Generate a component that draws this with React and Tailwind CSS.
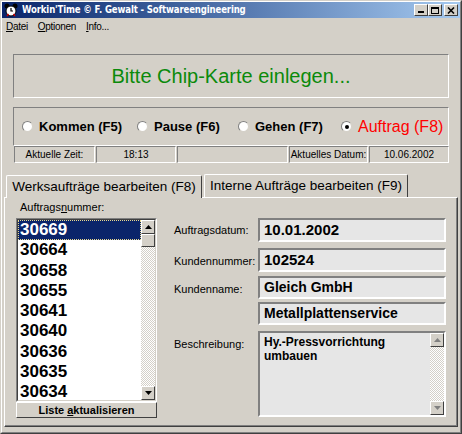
import React from 'react';

const raised = 'border border-t-white border-l-white border-r-[#404040] border-b-[#404040] bg-[#d4d0c8]';
const sunken = 'border border-t-[#808080] border-l-[#808080] border-r-white border-b-white';
const checker = 'bg-[repeating-conic-gradient(#d4d0c8_0_25%,#ffffff_0_50%)] bg-[length:2px_2px]';

const Arrow = ({ up, gray }) => (
  <svg width="7" height="4" viewBox="0 0 7 4">
    <path d={up ? 'M3.5 0L7 4H0z' : 'M0 0h7L3.5 4z'} fill={gray ? '#808080' : '#000'} />
  </svg>
);

const Radio = ({ label, checked, width, red }) => (
  <div className={`flex items-center shrink-0 ${width}`}>
    <span className="w-[11px] h-[11px] rounded-full bg-white border border-t-[#808080] border-l-[#808080] border-r-[#d4d0c8] border-b-[#d4d0c8] flex items-center justify-center shrink-0">
      {checked && <span className="w-[4px] h-[4px] rounded-full bg-black" />}
    </span>
    <span
      className={
        red
          ? 'ml-[6px] text-[16px] text-[#ff0000] whitespace-nowrap'
          : 'ml-[6px] text-[13px] font-bold whitespace-nowrap'
      }
    >
      {label}
    </span>
  </div>
);

const Field = ({ children, className }) => (
  <div className={`w-[188px] border-2 border-t-[#808080] border-l-[#808080] border-r-white border-b-white bg-[#e6e6e6] pl-[4px] flex items-center font-bold ${className}`}>
    {children}
  </div>
);

const items = ['30669', '30664', '30658', '30655', '30641', '30640', '30636', '30635', '30634'];

export default function App() {
  return (
    <div className="w-[462px] h-[434px] overflow-hidden bg-[#d4d0c8] font-['Liberation_Sans',Arial,sans-serif] text-black border border-t-[#d4d0c8] border-l-[#d4d0c8] border-r-[#404040] border-b-[#404040]">
      <div className="h-full border border-t-white border-l-white border-r-[#808080] border-b-[#808080] flex flex-col">
        {/* title bar */}
        <div className="h-[16px] bg-linear-to-r from-[#0a246a] to-[#a6caf0] flex items-center pl-[2px] pr-[2px]">
          <svg width="14" height="14" viewBox="0 0 14 14" className="shrink-0">
            <circle cx="3" cy="3" r="2.5" fill="#000" />
            <circle cx="11" cy="3" r="2.5" fill="#000" />
            <circle cx="7" cy="8" r="5" fill="#fff" stroke="#000" />
            <path d="M7 5v3h2" stroke="#000" strokeWidth="1.2" fill="none" />
            <path d="M3 13l1.5-2M11 13l-1.5-2" stroke="#c00" strokeWidth="1.4" />
          </svg>
          <span className="ml-[4px] text-white font-bold text-[11px] tracking-[-0.2px] whitespace-nowrap font-['DejaVu_Sans',sans-serif] scale-x-[0.78] origin-left">
            Workin'Time © F. Gewalt - Softwareengineering
          </span>
          <div className="ml-auto flex items-center">
            <div className={`w-[14px] h-[12px] ${raised} flex items-end justify-center pb-[2px]`}>
              <span className="w-[6px] h-[2px] bg-black" />
            </div>
            <div className={`w-[14px] h-[12px] ${raised} flex items-center justify-center`}>
              <span className="w-[8px] h-[7px] border border-black border-t-2" />
            </div>
            <div className={`ml-[2px] w-[14px] h-[12px] ${raised} flex items-center justify-center`}>
              <svg width="8" height="7" viewBox="0 0 8 7">
                <path d="M1 0.5l6 6M7 0.5l-6 6" stroke="#000" strokeWidth="1.6" />
              </svg>
            </div>
          </div>
        </div>

        {/* menu */}
        <div className="h-[17px] flex items-center text-[10px] tracking-[-0.3px] pl-[4px] gap-[10px]">
          <span><u>D</u>atei</span>
          <span><u>O</u>ptionen</span>
          <span><u>I</u>nfo...</span>
        </div>

        {/* message panel */}
        <div className={`mt-[19px] ml-[11px] w-[436px] h-[44px] ${sunken} flex items-center justify-center text-[20px] text-[#0b8a0b]`}>
          Bitte Chip-Karte einlegen...
        </div>

        {/* radio panel */}
        <div className={`mt-[9px] ml-[11px] w-[436px] h-[39px] ${sunken} flex items-center pl-[8px]`}>
          <Radio label="Kommen (F5)" width="w-[115px]" />
          <Radio label="Pause (F6)" width="w-[101px]" />
          <Radio label="Gehen (F7)" width="w-[103px]" />
          <Radio label="Auftrag (F8)" checked red width="w-[105px]" />
        </div>

        {/* status bar */}
        <div className="ml-[12px] h-[17px] flex gap-[1px] text-[10px]">
          <div className={`w-[81px] ${sunken} flex items-center justify-center`}>Aktuelle Zeit:</div>
          <div className={`w-[80px] ${sunken} flex items-center justify-center`}>18:13</div>
          <div className={`w-[111px] ${sunken}`} />
          <div className={`w-[79px] ${sunken} flex items-center justify-center`}>Aktuelles Datum:</div>
          <div className={`w-[80px] ${sunken} flex items-center justify-center`}>10.06.2002</div>
        </div>

        {/* tabs */}
        <div className="mt-[11px] ml-[2px] flex flex-col">
          <div className="h-[23px] flex items-end pl-[2px] text-[13.5px] relative z-10">
            <div className="h-[23px] w-[196px] border-t border-l border-r border-t-white border-l-white border-r-[#404040] rounded-t-[2px] bg-[#d4d0c8] flex items-center justify-center -mb-[1px]">
              Werksaufträge bearbeiten (F8)
            </div>
            <div className="ml-[2px] h-[23px] w-[204px] border-t border-l border-r border-t-white border-l-white border-r-[#404040] rounded-t-[2px] flex items-center justify-center">
              Interne Aufträge bearbeiten (F9)
            </div>
          </div>
          <div className="w-[454px] h-[230px] border border-t-white border-l-white border-r-[#404040] border-b-[#404040]">
            <div className="h-full border-r border-b border-r-[#808080] border-b-[#808080] flex">
              {/* left column */}
              <div className="ml-[11px] w-[141px] flex flex-col">
                <div className="mt-[3px] h-[13px] leading-[13px] text-[11px] pl-[4px]">
                  Auftrags<u>n</u>ummer:
                </div>
                <div className="mt-[4px] h-[184px] border border-t-[#808080] border-l-[#808080] border-r-white border-b-white">
                  <div className="h-full border border-t-[#404040] border-l-[#404040] border-r-[#d4d0c8] border-b-[#d4d0c8] bg-white flex">
                    <div className="flex-1 flex flex-col">
                      {items.map((n, i) => (
                        <div
                          key={n}
                          className={
                            i === 0
                              ? 'h-[20.25px] shrink-0 bg-[#0a246a] text-white font-bold text-[17px] leading-[18px] pl-[1px] border border-dotted border-[#e8d890]'
                              : 'h-[20.25px] shrink-0 font-bold text-[17px] leading-[20px] pl-[2px]'
                          }
                        >
                          {n}
                        </div>
                      ))}
                    </div>
                    <div className={`w-[14px] flex flex-col ${checker}`}>
                      <div className={`h-[14px] ${raised} flex items-center justify-center`}>
                        <Arrow up />
                      </div>
                      <div className={`h-[13px] ${raised}`} />
                      <div className="flex-1" />
                      <div className={`h-[14px] ${raised} flex items-center justify-center`}>
                        <Arrow />
                      </div>
                    </div>
                  </div>
                </div>
                <div className={`h-[16px] ${raised} flex items-center justify-center text-[11px] font-bold`}>
                  Liste <u className="ml-[3px]">a</u>ktualisieren
                </div>
              </div>

              {/* right column */}
              <div className="ml-[17px] mt-[20px] flex flex-col text-[11px]">
                <div className="flex items-center">
                  <div className="w-[84px]">Auftragsdatum:</div>
                  <Field className="h-[24px] text-[15px]">10.01.2002</Field>
                </div>
                <div className="mt-[6px] flex items-center">
                  <div className="w-[84px] pt-[3px]">Kundennummer:</div>
                  <Field className="h-[24px] text-[15px]">102524</Field>
                </div>
                <div className="mt-[4px] flex items-center">
                  <div className="w-[84px] pt-[3px]">Kundenname:</div>
                  <Field className="h-[23px] text-[14px]">Gleich GmbH</Field>
                </div>
                <div className="mt-[3px] flex items-center">
                  <div className="w-[84px]" />
                  <Field className="h-[23px] text-[14px]">Metallplattenservice</Field>
                </div>
                <div className="mt-[6px] flex items-start">
                  <div className="w-[84px] mt-[5px]">Beschreibung:</div>
                  <div className="w-[188px] h-[86px] border-2 border-t-[#808080] border-l-[#808080] border-r-white border-b-white bg-[#e6e6e6] flex">
                    <div className="flex-1 pl-[4px] pt-[2px] text-[12px] leading-[14px] font-bold">
                      Hy.-Pressvorrichtung
                      <br />
                      umbauen
                    </div>
                    <div className={`w-[14px] flex flex-col ${checker}`}>
                      <div className={`h-[14px] ${raised} flex items-center justify-center`}>
                        <Arrow up gray />
                      </div>
                      <div className="flex-1" />
                      <div className={`h-[14px] ${raised} flex items-center justify-center`}>
                        <Arrow gray />
                      </div>
                    </div>
                  </div>
                </div>
              </div>
            </div>
          </div>
        </div>
      </div>
    </div>
  );
}
